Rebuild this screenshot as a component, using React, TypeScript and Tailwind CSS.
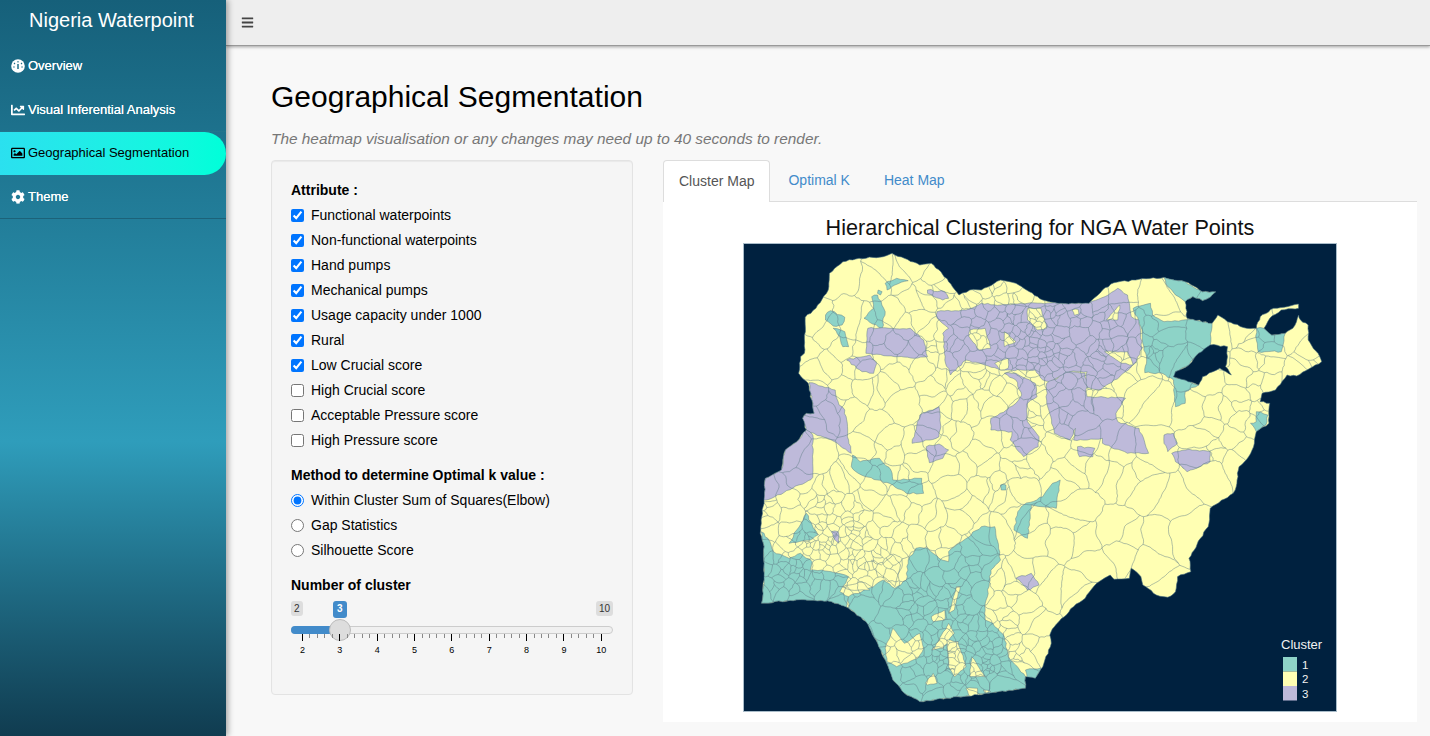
import * as React from "react";
import { FaChartLine, FaRegImage, FaCog, FaBars } from "react-icons/fa";

type Pt = [number, number];

const attributes = [
  { name: "Functional waterpoints", checked: true },
  { name: "Non-functional waterpoints", checked: true },
  { name: "Hand pumps", checked: true },
  { name: "Mechanical pumps", checked: true },
  { name: "Usage capacity under 1000", checked: true },
  { name: "Rural", checked: true },
  { name: "Low Crucial score", checked: true },
  { name: "High Crucial score", checked: false },
  { name: "Acceptable Pressure score", checked: false },
  { name: "High Pressure score", checked: false },
];

const methods = ["Within Cluster Sum of Squares(Elbow)", "Gap Statistics", "Silhouette Score"];

function DialIcon() {
  return (
    <svg width="14" height="14" viewBox="0 0 14 14">
      <circle cx="7" cy="7" r="6.8" fill="white" />
      <path d="M7 2v1.6M3 4l1 1M11 4l-1 1M2.2 8h1.5M10.3 8h1.5" stroke="#1f6f88" strokeWidth="1.1" />
      <path d="M7 5v5" stroke="#1f6f88" strokeWidth="1.5" />
    </svg>
  );
}

const navigation = [
  { name: "Overview", icon: <DialIcon /> },
  { name: "Visual Inferential Analysis", icon: <FaChartLine size={14} /> },
  { name: "Geographical Segmentation", icon: <FaRegImage size={14} />, active: true },
  { name: "Theme", icon: <FaCog size={14} /> },
];

// map shapes, traced at 2.6x / 3x from the picture; y runs on past 720 for the south half
const outline: number[] = [
  172,232,200,205,232,150,235,100,270,65,312,55,375,50,398,40,430,55,470,75,500,70,525,95,545,125,572,165,600,150,630,150,680,120,720,130,755,155,790,180,830,190,910,190,945,150,975,128,1040,118,1105,112,1160,125,1205,155,1240,155,1225,172,1205,182,1180,170,1160,185,1165,235,1180,238,1230,250,1245,225,1270,245,1320,265,1345,265,1355,230,1390,205,1455,192,1455,205,1410,210,1380,235,1365,265,1385,285,1420,280,1440,265,1455,225,1460,240,1480,255,1480,300,1510,350,1515,365,1450,408,1425,405,1395,450,1360,460,1355,485,1380,490,1378,550,1345,575,1340,610,1325,650,1300,680,1295,720,
  1290,750,1285,760,1225,805,1220,860,1200,895,1170,955,1175,995,1140,1010,1135,1055,1115,1072,1085,1065,1050,1035,1045,1010,1020,985,1015,1015,975,1018,965,1005,930,1030,900,1075,870,1100,820,1160,808,1185,812,1210,790,1280,770,1315,745,1310,745,1345,650,1360,540,1375,470,1385,430,1360,400,1320,380,1260,360,1210,330,1145,285,1105,240,1085,150,1080,58,1090,65,1020,65,920,55,880,60,810,65,780,68,715,110,690,120,630,150,605,175,570,165,535,175,520,195,520,180,430,155,400,160,350,170,340,
];

const lake: number[] = [1225,315,1270,320,1270,350,1265,380,1280,405,1250,385,1205,410,1195,435,1160,420,1130,410,1135,395,1170,375,1195,340];

const teal: number[][] = [
  [1105,112,1160,125,1205,155,1240,155,1225,172,1205,182,1180,170,1160,185,1135,165,1115,140],
  [1025,205,1070,190,1075,225,1105,245,1180,238,1230,250,1225,315,1195,340,1170,375,1135,395,1130,410,1160,420,1195,435,1160,455,1160,490,1135,500,1130,420,1100,400,1055,398,1060,360,1050,310,1045,260],
  [1345,265,1365,265,1385,285,1420,280,1410,335,1350,335,1345,300],
  [1345,515,1375,525,1370,555,1345,575,1330,550,1345,545],
  [380,130,410,115,440,122,405,135,385,150],
  [362,150,372,155,368,165,360,160],
  [345,170,360,165,380,215,372,265,325,235,350,205],
  [225,225,238,212,275,232,268,255,245,258,225,240],
  [245,265,275,275,285,320,270,320,262,290],
  [755,225,770,225,778,270,765,270],
  [295,645,315,665,365,655,395,690,400,720,475,715,480,760,435,760,400,735,360,720,310,700,292,680],
  [740,795,790,770,815,730,835,720,825,805,760,795,750,895,715,870,725,815],
  [680,735,694,735,694,750,682,750],
  [175,820,190,855,205,885,185,900,130,910,150,870],
  [58,875,75,895,90,935,130,955,160,940,190,965,185,990,215,990,240,995,285,1010,262,1055,285,1070,280,1105,240,1085,150,1080,58,1090,65,1020,65,920],
  [285,1070,350,1040,375,1020,405,1045,435,1020,440,960,460,925,490,925,520,955,545,965,545,935,560,920,630,860,665,860,675,925,680,960,655,990,650,1040,640,1090,640,1140,660,1150,690,1190,700,1250,745,1310,745,1345,650,1360,540,1375,470,1385,430,1360,400,1320,380,1260,360,1210,330,1145,285,1105],
  [745,1290,785,1285,770,1320,750,1325],
  [1140,660,1190,650,1195,635,1190,660,1155,685],
];

const purple: number[][] = [
  [515,215,590,210,630,190,680,195,750,190,830,190,910,190,960,165,985,145,1010,165,1020,230,1040,240,1048,325,1030,370,990,410,940,450,900,440,905,395,860,395,810,425,790,420,770,390,735,390,680,390,640,375,590,360,550,405,535,360,530,280,545,265,515,235],
  [800,430,860,395,900,400,905,470,1005,475,980,520,985,545,1040,565,1065,640,1010,640,945,610,945,595,905,600,870,600,875,565,860,600,820,580,800,480],
  [690,400,720,400,770,430,775,470,750,490,750,545,780,590,778,620,740,650,705,600,710,575,655,570,655,535,695,510,720,490,735,465,720,420],
  [335,265,445,265,480,300,490,350,455,355,405,350,330,340],
  [280,360,340,345,358,370,350,400,320,395],
  [490,150,535,155,545,175,530,180,490,160],
  [182,428,250,450,260,495,275,510,285,600,292,640,240,600,195,580,175,570,165,535,175,520,195,520],
  [175,570,192,585,192,712,180,722,85,775,62,780,68,715,110,690,120,630,150,605],
  [1125,640,1170,628,1225,635,1225,665,1165,695,1135,665],
  [1105,585,1130,580,1140,610,1115,635,1105,610],
  [487,620,520,612,545,630,530,655,495,668],
  [450,610,470,525,520,500,525,560,520,590,495,600],
  [880,620,925,625,920,650,885,650],
  [720,1015,760,1000,780,1035,750,1050,735,1030],
  [240,875,258,875,260,910,245,890],
];

// yellow pockets that sit inside the clusters
const pockets: number[][] = [
  [600,270,640,265,655,325,625,330,598,290],
  [690,275,720,305,690,320],
  [750,205,785,205,800,265,775,270,750,240],
  [866,210,882,208,884,222,872,226],
  [990,195,985,240,955,240],
  [950,335,1010,335,1025,375,995,370],
  [665,370,700,355,700,385,680,390],
  [380,1225,400,1165,430,1210,470,1180,480,1225,465,1255,410,1280,385,1265],
  [500,1130,535,1110,535,1140,505,1145],
  [565,1040,575,1040,560,1110,545,1120],
  [510,1220,545,1150,560,1180,530,1225,500,1230],
  [540,1200,570,1205,590,1280,560,1310,545,1280],
  [485,1330,505,1300,515,1330,490,1335],
  [605,1250,640,1310,600,1310],
  [590,1345,620,1345,620,1370,600,1370],
  [635,1350,655,1355,640,1360],
  [270,1040,320,1025,340,1050,290,1050],
  [345,960,370,975,400,945,420,975,405,1040,350,985],
];

const toPage = (a: number[]): Pt[] => {
  const out: Pt[] = [];
  for (let i = 0; i < a.length; i += 2) out.push([a[i] / 2.6, a[i + 1] / 3]);
  return out;
};

function makeRnd(start: number) {
  let seed = start;
  return () => {
    seed = (seed * 16807) % 2147483647;
    return seed / 2147483647;
  };
}

// breaks the straight traced edges up so they look like real borders
function rough(a: number[], amp: number, start: number) {
  const rnd = makeRnd(start);
  const p = toPage(a);
  const out: string[] = [];
  p.forEach((s, i) => {
    const e = p[(i + 1) % p.length];
    const dx = e[0] - s[0];
    const dy = e[1] - s[1];
    const len = Math.hypot(dx, dy) || 1;
    const n = Math.max(1, Math.round(len / 3.5));
    for (let k = 0; k < n; k++) {
      const t = k / n;
      const off = k === 0 ? 0 : (rnd() - 0.5) * amp * 2;
      out.push((s[0] + dx * t - (dy / len) * off).toFixed(1) + "," + (s[1] + dy * t + (dx / len) * off).toFixed(1));
    }
  });
  return out.join(" ");
}

function inside(p: Pt, poly: Pt[]) {
  let c = false;
  for (let i = 0, j = poly.length - 1; i < poly.length; j = i++) {
    const a = poly[i];
    const b = poly[j];
    if (a[1] > p[1] !== b[1] > p[1] && p[0] < ((b[0] - a[0]) * (p[1] - a[1])) / (b[1] - a[1]) + a[0]) c = !c;
  }
  return c;
}

// how tightly the districts pack around a point
function density(x: number, y: number) {
  const spots = [
    [295, 101, 40, 1.0],
    [300, 90, 110, 0.42],
    [235, 415, 50, 1.0],
    [215, 390, 70, 0.5],
    [105, 300, 50, 0.85],
    [50, 335, 28, 0.9],
    [190, 180, 60, 0.16],
  ];
  // the east and the middle belt have the large districts
  let d = x > 330 && y > 170 ? 0.055 : 0.1;
  for (const [sx, sy, r, w] of spots) {
    const q = (x - sx) ** 2 + (y - sy) ** 2;
    d = Math.max(d, w * Math.exp(-q / (r * r)));
  }
  return d;
}

// voronoi cells with bent edges, so the lines read as district borders
function districtLines() {
  const rnd = makeRnd(41);
  const shape = toPage(outline);
  const seeds: Pt[] = [];
  let tries = 0;
  while (seeds.length < 760 && tries < 80000) {
    tries++;
    const p: Pt = [rnd() * 600, rnd() * 480];
    if (rnd() < density(p[0], p[1]) && inside(p, shape)) seeds.push(p);
  }
  const seen = new Set<string>();
  let d = "";
  const bend = (a: Pt, b: Pt) => {
    const k1 = a[0].toFixed(1) + "," + a[1].toFixed(1);
    const k2 = b[0].toFixed(1) + "," + b[1].toFixed(1);
    if (k1 === k2) return;
    const key = k1 < k2 ? k1 + "|" + k2 : k2 + "|" + k1;
    if (seen.has(key)) return;
    seen.add(key);
    const dx = b[0] - a[0];
    const dy = b[1] - a[1];
    const len = Math.hypot(dx, dy);
    const n = Math.max(1, Math.round(len / 2.5));
    const swing = Math.min(4, len * 0.16) * (rnd() - 0.5) * 2;
    const curl = Math.min(1.6, len * 0.06) * (rnd() - 0.5) * 2;
    d += "M" + a[0].toFixed(1) + " " + a[1].toFixed(1);
    for (let i = 1; i <= n; i++) {
      const t = i / n;
      const off = i === n ? 0 : swing * Math.sin(Math.PI * t) + curl * Math.sin(3 * Math.PI * t) + (rnd() - 0.5) * 0.7;
      d += "L" + (a[0] + dx * t - (dy / len) * off).toFixed(1) + " " + (a[1] + dy * t + (dx / len) * off).toFixed(1);
    }
  };
  seeds.forEach((s, i) => {
    let cell: Pt[] = [[0, 0], [600, 0], [600, 480], [0, 480]];
    seeds.forEach((o, j) => {
      if (i === j || cell.length === 0) return;
      const mx = (s[0] + o[0]) / 2;
      const my = (s[1] + o[1]) / 2;
      const nx = o[0] - s[0];
      const ny = o[1] - s[1];
      const next: Pt[] = [];
      for (let k = 0; k < cell.length; k++) {
        const a = cell[k];
        const b = cell[(k + 1) % cell.length];
        const da = (a[0] - mx) * nx + (a[1] - my) * ny;
        const db = (b[0] - mx) * nx + (b[1] - my) * ny;
        if (da <= 0) next.push(a);
        if (da < 0 !== db < 0) {
          const t = da / (da - db);
          next.push([a[0] + (b[0] - a[0]) * t, a[1] + (b[1] - a[1]) * t]);
        }
      }
      cell = next;
    });
    cell.forEach((a, k) => bend(a, cell[(k + 1) % cell.length]));
  });
  return d;
}

function ClusterMap() {
  const lines = React.useMemo(districtLines, []);
  const shape = React.useMemo(() => rough(outline, 0.7, 7), []);
  const stroke = "#64808a";
  return (
    <svg viewBox="5 4 592 467" className="block h-[469px] w-[594px] border border-[#a9bcc9] bg-[#00213f]">
      <defs>
        <clipPath id="ngaShape">
          <polygon points={shape} />
        </clipPath>
      </defs>
      <polygon points={shape} fill="#ffffb3" />
      <g clipPath="url(#ngaShape)">
        {teal.map((p, i) => (
          <polygon key={i} points={rough(p, 0.8, 100 + i)} fill="#8dd3c7" stroke={stroke} strokeWidth="0.5" />
        ))}
        {purple.map((p, i) => (
          <polygon key={i} points={rough(p, 0.8, 200 + i)} fill="#bebada" stroke={stroke} strokeWidth="0.5" />
        ))}
        {pockets.map((p, i) => (
          <polygon key={i} points={rough(p, 0.6, 300 + i)} fill="#ffffb3" stroke={stroke} strokeWidth="0.5" />
        ))}
        <path d={lines} fill="none" stroke={stroke} strokeWidth="0.5" />
      </g>
      <polygon points={shape} fill="none" stroke="#40667a" strokeWidth="0.6" />
      <polygon points={rough(lake, 0.7, 9)} fill="#00213f" stroke="#40667a" strokeWidth="0.6" />

      {/* legend */}
      <text x="542" y="409" fill="#f2f2f2" fontSize="13" fontFamily="Liberation Sans, sans-serif">Cluster</text>
      <rect x="544" y="417" width="14" height="14.5" fill="#8dd3c7" />
      <rect x="544" y="431.5" width="14" height="14.5" fill="#ffffb3" />
      <rect x="544" y="446" width="14" height="14.5" fill="#bebada" />
      <text x="563" y="429" fill="#f2f2f2" fontSize="11.5" fontFamily="Liberation Sans, sans-serif">1</text>
      <text x="563" y="443" fill="#f2f2f2" fontSize="11.5" fontFamily="Liberation Sans, sans-serif">2</text>
      <text x="563" y="458" fill="#f2f2f2" fontSize="11.5" fontFamily="Liberation Sans, sans-serif">3</text>
    </svg>
  );
}

function Slider() {
  const ticks = Array.from({ length: 41 }, (_, i) => i);
  const labels = [2, 3, 4, 5, 6, 7, 8, 9, 10];
  return (
    <div className="relative mt-[6px] h-[62px]">
      <span className="absolute left-0 top-0 h-[15px] rounded-[3px] bg-[#dddddd] px-[3px] text-[10px] leading-[15px] text-[#333]">2</span>
      <span className="absolute left-[42px] top-0 h-[17px] rounded-[3px] bg-[#428bca] px-[4px] text-[10px] font-bold leading-[15px] text-white">3</span>
      <span className="absolute right-0 top-0 h-[15px] rounded-[3px] bg-[#dddddd] px-[3px] text-[10px] leading-[15px] text-[#333]">10</span>

      <div className="absolute left-0 right-0 top-[25px] h-[8px] rounded-[4px] border border-[#cccccc] bg-[#f0f0f0]" />
      <div className="absolute left-0 top-[25px] h-[8px] w-[45px] rounded-l-[4px] bg-[#428bca]" />
      <div className="absolute left-[38px] top-[18px] h-[22px] w-[22px] rounded-full border border-[#bbbbbb] bg-[#dddddd]" />

      <div className="absolute left-[11px] right-[11px] top-[33px] flex items-start justify-between">
        {ticks.map((t) => (
          <div key={t} className="relative w-px">
            {t % 5 === 0 ? <div className="h-[7px] w-px bg-black" /> : <div className="h-[4px] w-px bg-[#888]" />}
            {t % 5 === 0 && (
              <span className="absolute left-1/2 top-[10px] -translate-x-1/2 text-[9px] leading-[12px] text-black">
                {labels[t / 5]}
              </span>
            )}
          </div>
        ))}
      </div>
    </div>
  );
}

export default function App() {
  return (
    <div className="flex h-[736px] w-[1430px] overflow-hidden bg-[#f8f8f8] font-['Liberation_Sans',Arial,sans-serif] text-[14px] text-black">
      {/* sidebar */}
      <aside className="relative z-20 flex w-[226px] shrink-0 flex-col bg-gradient-to-b from-[#16607a] via-[#2f9dbb] via-60% to-[#103c50] shadow-[2px_0_6px_rgba(0,0,0,0.35)]">
        <div className="flex h-[44px] items-center justify-center pb-[4px] pr-[3px] text-[20px] text-white">Nigeria Waterpoint</div>
        <nav className="flex flex-col">
          {navigation.map((item, i) => (
            <a
              key={item.name}
              href="#"
              className={
                item.active
                  ? "flex h-[43px] items-center gap-[3px] rounded-r-[22px] bg-gradient-to-r from-[#2be0ef] to-[#00ffd9] pb-[2px] pl-[11px] text-[13px] text-black"
                  : i === 1
                    ? "flex h-[44px] items-center gap-[3px] border-b border-[#23748c] pl-[11px] text-[13px] text-white [text-shadow:0_0_0.6px_white]"
                    : i === 3
                      ? "flex h-[44px] items-center gap-[3px] border-b border-[#1c6279] pl-[11px] text-[13px] text-white [text-shadow:0_0_0.6px_white]"
                      : "flex h-[44px] items-center gap-[3px] pl-[11px] text-[13px] text-white [text-shadow:0_0_0.6px_white]"
              }
            >
              {item.icon}
              {item.name}
            </a>
          ))}
        </nav>
      </aside>

      <div className="flex min-w-0 flex-1 flex-col">
        {/* top bar */}
        <header className="relative z-10 flex h-[46px] shrink-0 items-center border-b border-[#999999] bg-[#eeeeee] pl-[15px] shadow-[0_1px_3px_rgba(0,0,0,0.35)]">
          <FaBars size={13} className="text-[#444]" />
        </header>

        <main className="flex min-h-0 flex-1 flex-col pl-[45px] pr-[13px]">
          <h2 className="mt-[34px] text-[30px] leading-[33px]">Geographical Segmentation</h2>
          <p className="mt-[16px] text-[15.4px] italic leading-[20px] text-[#777]">
            The heatmap visualisation or any changes may need up to 40 seconds to render.
          </p>

          <div className="mt-[11px] flex items-start gap-[30px]">
            {/* inputs */}
            <form className="h-[535px] w-[362px] shrink-0 rounded-[4px] border border-[#e3e3e3] bg-[#f5f5f5] px-[19px] pt-[19px] shadow-[inset_0_1px_1px_rgba(0,0,0,0.05)]">
              <div className="font-bold leading-[20px]">Attribute :</div>
              <div className="mt-[3px] flex flex-col">
                {attributes.map((a) => (
                  <label key={a.name} className="flex h-[25px] items-center gap-[7px]">
                    <input type="checkbox" defaultChecked={a.checked} className="m-0 h-[13px] w-[13px]" />
                    {a.name}
                  </label>
                ))}
              </div>
              <div className="mt-[12px] font-bold leading-[20px]">Method to determine Optimal k value :</div>
              <div className="mt-[3px] flex flex-col">
                {methods.map((m, i) => (
                  <label key={m} className="flex h-[25px] items-center gap-[7px]">
                    <input type="radio" name="method" defaultChecked={i === 0} className="m-0 h-[13px] w-[13px]" />
                    {m}
                  </label>
                ))}
              </div>
              <div className="mt-[12px] font-bold leading-[20px]">Number of cluster</div>
              <Slider />
            </form>

            {/* tabs */}
            <section className="min-w-0 flex-1">
              <div className="flex h-[42px] border-b border-[#dddddd]">
                <button type="button" className="h-[42px] rounded-t-[4px] border border-b-0 border-[#dddddd] bg-white px-[15px] text-[#555]">
                  Cluster Map
                </button>
                <button type="button" className="ml-[3px] h-[41px] px-[15px] text-[#428bca]">Optimal K</button>
                <button type="button" className="ml-[4px] h-[41px] px-[15px] text-[#428bca]">Heat Map</button>
              </div>
              <div className="flex h-[520px] flex-col items-center bg-white pt-[12px]">
                <div className="h-[29px] text-[21.6px] leading-[28px] text-[#111]">Hierarchical Clustering for NGA Water Points</div>
                <ClusterMap />
              </div>
            </section>
          </div>
        </main>
      </div>
    </div>
  );
}
